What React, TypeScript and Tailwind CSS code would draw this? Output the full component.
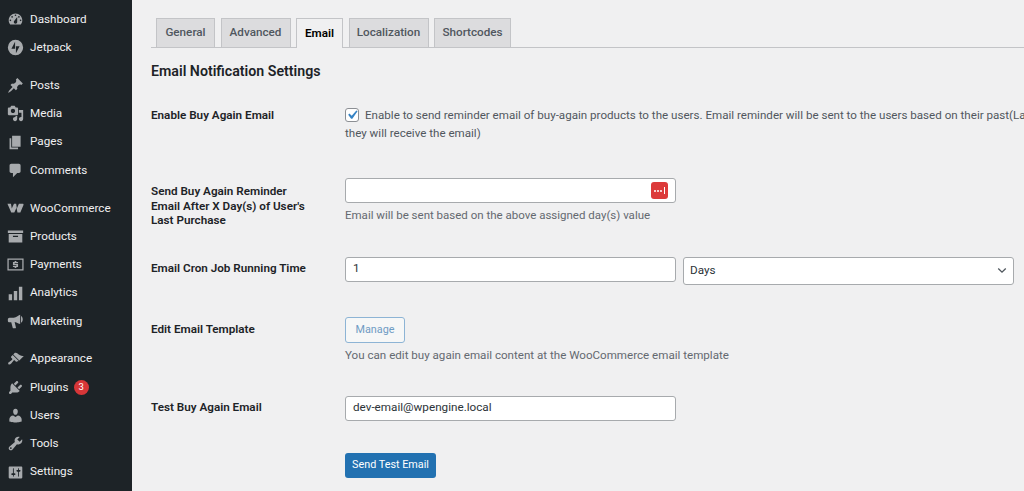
import type { ReactNode } from "react"

const paths: Record<string, string> = {
  dashboard: "M3.76 16h12.48c1.1-1.37 1.76-3.11 1.76-5 0-4.42-3.58-8-8-8s-8 3.58-8 8c0 1.89.66 3.63 1.76 5zM10 4c.55 0 1 .45 1 1s-.45 1-1 1-1-.45-1-1 .45-1 1-1zM6 6c.55 0 1 .45 1 1s-.45 1-1 1-1-.45-1-1 .45-1 1-1zm8 0c.55 0 1 .45 1 1s-.45 1-1 1-1-.45-1-1 .45-1 1-1zm-5.37 5.55L12 7v6c0 1.1-.9 2-2 2s-2-.9-2-2c0-.57.24-1.08.63-1.45zM4 10c.55 0 1 .45 1 1s-.45 1-1 1-1-.45-1-1 .45-1 1-1zm12 0c.55 0 1 .45 1 1s-.45 1-1 1-1-.45-1-1 .45-1 1-1z",
  jetpack: "M10 1a9 9 0 1 0 0 18 9 9 0 0 0 0-18zM9.5 11.5H5.2l4.3-8.4v8.4zm1-3h4.3l-4.3 8.4V8.5z",
  posts: "M10.44 3.02l1.82-1.82 6.36 6.35-1.83 1.82c-1.05-.68-2.48-.57-3.41.36l-.75.75c-.92.93-1.04 2.35-.35 3.41l-1.83 1.82-2.41-2.41-2.8 2.79c-.42.42-3.38 2.71-3.8 2.29s1.86-3.39 2.28-3.81l2.79-2.79L4.1 9.36l1.83-1.82c1.05.69 2.48.57 3.4-.36l.75-.75c.93-.92 1.05-2.35.36-3.41z",
  media: "M13 11V4c0-.55-.45-1-1-1h-1.67L9 1H5L3.67 3H2c-.55 0-1 .45-1 1v7c0 .55.45 1 1 1h10c.55 0 1-.45 1-1zM7 4.5c1.38 0 2.5 1.12 2.5 2.5S8.38 9.5 7 9.5 4.5 8.38 4.5 7 5.62 4.5 7 4.5zM14 6h5v10.5c0 1.38-1.12 2.5-2.5 2.5S14 17.88 14 16.5s1.12-2.5 2.5-2.5c.17 0 .34.02.5.05V9h-3V6zm-4 8.05V13h2v3.5c0 1.38-1.12 2.5-2.5 2.5S7 17.88 7 16.5 8.12 14 9.5 14c.17 0 .34.02.5.05z",
  pages: "M6 15V2h10v13H6zm-1 1h8v2H3V5h2v11z",
  comments: "M5 2h9c1.1 0 2 .9 2 2v7c0 1.1-.9 2-2 2h-2l-5 5v-5H5c-1.1 0-2-.9-2-2V4c0-1.1.9-2 2-2z",
  woo: "M0.5 4.5h4.2l.9 5.6 2.6-5.6h2.6l.8 5.6 2.4-5.6h4.4c.9 0 1.4.7 1 1.5l-3.7 8.6h-3.4l-1.1-5.4-2.6 5.4H5L.5 4.5z",
  products: "M1 3h18v3H1zM2 7h16v10H2zM7 9v1.5h6V9z",
  payments: "M0.5 3h19v14H.5zM2 4.5v11h16v-11zM11 6v1h2v1.5H9v1h4V13h-2v1H9v-1H7v-1.5h4v-1H7V7h2V6z",
  analytics: "M2 11h4v7H2zM8 7h4v11H8zM14 2h4v16h-4z",
  marketing: "M18.5 7.5c0 1.6-.8 3.3-2 3.9V3.6c1.2.6 2 2.3 2 3.9zM15.5 2v11c-1.5 0-3.5-1.8-6.5-2.3l1.5 6.3c.2.6-.2 1-.7 1H7.5c-.4 0-.7-.2-.8-.6L5 11H3c-1.1 0-2-.9-2-2V7.5c0-1.1.9-2 2-2h5c3 0 6-3.5 7.5-3.5z",
  appearance: "M14.48 11.06L7.41 3.99l1.5-1.5c.5-.56 2.3-.47 3.51.32 1.21.8 1.43 1.28 2.91 2.1 1.18.64 2.45 1.26 4.45.85zm-.71.71L6.7 4.7 4.93 6.47c-.39.39-.39 1.02 0 1.41l1.06 1.06c.39.39.39 1.03 0 1.42-.6.6-1.43 1.11-2.21 1.69-.35.26-.7.53-1.01.84C1.43 13.23.91 14.67 1.7 15.46c.79.79 2.23.27 3.57-1.07.31-.31.58-.66.84-1.01.58-.78 1.09-1.61 1.69-2.21.39-.39 1.03-.39 1.42 0l1.06 1.06c.39.39 1.02.39 1.41 0z",
  plugins: "M13.11 4.36L9.87 7.6 8 5.73l3.24-3.24c.35-.34 1.05-.2 1.56.32.52.51.66 1.21.31 1.55zm-8 1.77l.91-1.12 9.01 9.01-1.19.84c-.71.71-2.63 1.16-3.82 1.16H6.14L4.9 17.26c-.59.59-1.54.59-2.12 0-.59-.58-.59-1.53 0-2.12l1.24-1.24v-3.88c0-1.13.4-3.19 1.09-3.89zm7.26 3.97l3.24-3.24c.34-.35 1.04-.21 1.55.31.52.51.66 1.21.31 1.55l-3.24 3.25z",
  users: "M10 9.25c-2.27 0-2.73-3.44-2.73-3.44C7 4.02 7.82 2 9.97 2c2.16 0 2.98 2.02 2.71 3.81 0 0-.41 3.44-2.68 3.44zm0 2.57L12.72 10c2.39 0 4.52 2.33 4.52 4.53v2.49s-3.65 1.13-7.24 1.13c-3.65 0-7.24-1.13-7.24-1.13v-2.49c0-2.25 1.94-4.48 4.47-4.48z",
  tools: "M16.68 9.77c-1.34 1.34-3.3 1.67-4.95.99l-5.41 6.52c-.99.99-2.59.99-3.58 0s-.99-2.59 0-3.57l6.52-5.42c-.68-1.65-.35-3.61.99-4.95 1.28-1.28 3.12-1.62 4.72-1.06l-2.89 2.89 2.82 2.82 2.86-2.87c.53 1.58.18 3.39-1.08 4.67zM3.81 16.21c.4.39 1.04.39 1.43 0 .4-.4.4-1.04 0-1.43-.39-.4-1.03-.4-1.43 0-.39.39-.39 1.03 0 1.43z",
  settings: "M18 16V4c0-.55-.45-1-1-1H3c-.55 0-1 .45-1 1v12c0 .55.45 1 1 1h14c.55 0 1-.45 1-1zM8 11h1c.55 0 1 .45 1 1s-.45 1-1 1H8v1.5c0 .28-.22.5-.5.5s-.5-.22-.5-.5V13H6c-.55 0-1-.45-1-1s.45-1 1-1h1V5.5c0-.28.22-.5.5-.5s.5.22.5.5V11zm5-2h-1c-.55 0-1-.45-1-1s.45-1 1-1h1V5.5c0-.28.22-.5.5-.5s.5.22.5.5V7h1c.55 0 1 .45 1 1s-.45 1-1 1h-1v5.5c0 .28-.22.5-.5.5s-.5-.22-.5-.5V9z",
}

const menuGroups = [
  [["Dashboard", "dashboard"], ["Jetpack", "jetpack"]],
  [["Posts", "posts"], ["Media", "media"], ["Pages", "pages"], ["Comments", "comments"]],
  [["WooCommerce", "woo"], ["Products", "products"], ["Payments", "payments"], ["Analytics", "analytics"], ["Marketing", "marketing"]],
  [["Appearance", "appearance"], ["Plugins", "plugins"], ["Users", "users"], ["Tools", "tools"], ["Settings", "settings"]],
]

const tabs = [
  { name: "General", width: "w-[59px]" },
  { name: "Advanced", width: "w-[70px]" },
  { name: "Email", width: "w-[47px]" },
  { name: "Localization", width: "w-[80px]" },
  { name: "Shortcodes", width: "w-[77px]" },
]

function MenuItem({ label, icon }: { label: string; icon: string }) {
  return (
    <div className="flex h-[28.25px] items-center pl-[7px] text-[11.7px] text-[#f0f0f1]">
      <svg viewBox="0 0 20 20" className="mr-[6px] h-[17px] w-[17px] shrink-0 fill-[#a7aaad]">
        <path fillRule="evenodd" d={paths[icon]} />
      </svg>
      {label}
      {label === "Plugins" && (
        <span className="ml-[5px] flex h-[15px] w-[15px] items-center justify-center rounded-full bg-[#d63638] text-[9.5px] text-white">
          3
        </span>
      )}
    </div>
  )
}

function Row({ label, className, children }: { label: ReactNode; className: string; children: ReactNode }) {
  return (
    <div className={`flex ${className}`}>
      <div className="w-[194px] shrink-0 text-[11.7px] leading-[14.5px] font-semibold text-[#1d2327]">{label}</div>
      <div className="min-w-0 flex-1">{children}</div>
    </div>
  )
}

function TextBox({ value, children }: { value?: string; children?: ReactNode }) {
  return (
    <div className="flex h-[25px] w-[331px] items-center justify-between rounded-[3px] border border-[#a7aaad] bg-white px-[7px] text-[11.7px] text-[#2c3338]">
      <span>{value}</span>
      {children}
    </div>
  )
}

export default function App() {
  return (
    <div className="flex h-[491px] w-[1024px] overflow-hidden bg-[#f0f0f1] font-['Roboto',sans-serif]">
      <aside className="w-[132px] shrink-0 bg-[#1d2327] pt-[5.5px]">
        {menuGroups.map((group) => (
          <div key={group[0][0]} className="mb-[9.6px]">
            {group.map(([label, icon]) => (
              <MenuItem key={label} label={label} icon={icon} />
            ))}
          </div>
        ))}
      </aside>

      <main className="min-w-0 flex-1 pt-[18px] pl-[19px]">
        <div className="flex h-[30px] gap-[5.5px] border-b border-[#c3c4c7] pl-[5px]">
          {tabs.map((tab) =>
            tab.name === "Email" ? (
              <div key={tab.name} className={`flex h-[30px] items-center justify-center border border-b-0 border-[#c3c4c7] bg-[#f0f0f1] text-[11.7px] font-semibold text-black ${tab.width}`}>
                {tab.name}
              </div>
            ) : (
              <div key={tab.name} className={`flex h-[29px] items-center justify-center border border-b-0 border-[#c3c4c7] bg-[#dcdcde] text-[11.7px] font-medium text-[#50575e] ${tab.width}`}>
                {tab.name}
              </div>
            ),
          )}
        </div>

        <h2 className="mt-[14px] text-[14.2px] leading-[18px] font-semibold text-[#1d2327]">Email Notification Settings</h2>

        <Row label={<span className="mt-[1px] block">Enable Buy Again Email</span>} className="mt-[27px]">
          <div className="-mt-[1px] text-[11.6px] leading-[18px] whitespace-nowrap text-[#50575e]">
            <div className="flex items-center">
              <span className="mr-[6px] flex h-[14px] w-[14px] items-center justify-center rounded-[3px] border border-[#8c8f94] bg-white">
                <svg viewBox="0 0 20 20" className="h-[18px] w-[18px] shrink-0 fill-[#3582c4]">
                  <path d="M14.83 4.89l1.34.94-5.81 8.38H9.02L5.78 9.67l1.34-1.25 2.57 2.4z" />
                </svg>
              </span>
              Enable to send reminder email of buy-again products to the users. Email reminder will be sent to the users based on their past(Last Purchase) order
            </div>
            <div>they will receive the email)</div>
          </div>
        </Row>

        <Row label={<>Send Buy Again Reminder<br />Email After X Day(s) of User's<br />Last Purchase</>} className="mt-[42px]">
          <div className="-mt-[6px]">
            <TextBox>
              <span className="flex h-[17px] w-[17px] items-center justify-center gap-[1px] rounded-[3px] bg-[#dc3a3a]">
                <span className="h-[2px] w-[2px] rounded-full bg-white" />
                <span className="h-[2px] w-[2px] rounded-full bg-white" />
                <span className="h-[2px] w-[2px] rounded-full bg-white" />
                <span className="ml-[1px] h-[7px] w-px bg-white" />
              </span>
            </TextBox>
            <p className="mt-[3px] text-[11.5px] leading-[18px] text-[#646970]">Email will be sent based on the above assigned day(s) value</p>
          </div>
        </Row>

        <Row label={<span className="mt-[4px] block">Email Cron Job Running Time</span>} className="mt-[29px]">
          <div className="flex items-start gap-[7px]">
            <TextBox value="1" />
            <div className="flex h-[28px] w-[331px] items-center justify-between rounded-[3px] border border-[#a7aaad] bg-white pr-[6px] pl-[6px] text-[11.7px] text-[#2c3338]">
              Days
              <svg viewBox="0 0 12 8" className="h-[7px] w-[10px] fill-none stroke-[#50575e] stroke-[1.6]">
                <path d="M1.5 1.5 6 6l4.5-4.5" />
              </svg>
            </div>
          </div>
        </Row>

        <Row label={<span className="mt-[5px] block">Edit Email Template</span>} className="mt-[32px]">
          <button className="flex h-[26px] w-[60px] items-center justify-center rounded-[3px] border border-[#8db4d5] bg-[#f6f7f7] pt-[2px] text-[10.8px] text-[#6f9cc4]">Manage</button>
          <p className="mt-[3px] text-[11.6px] leading-[18px] text-[#646970]">You can edit buy again email content at the WooCommerce email template</p>
        </Row>

        <Row label={<span className="mt-[4px] block">Test Buy Again Email</span>} className="mt-[32px]">
          <TextBox value="dev-email@wpengine.local" />
        </Row>

        <div className="mt-[32px] pl-[194px]">
          <button className="flex h-[25px] w-[91px] items-center justify-center rounded-[3px] bg-[#2271b1] text-[10.8px] text-white">Send Test Email</button>
        </div>
      </main>
    </div>
  )
}
